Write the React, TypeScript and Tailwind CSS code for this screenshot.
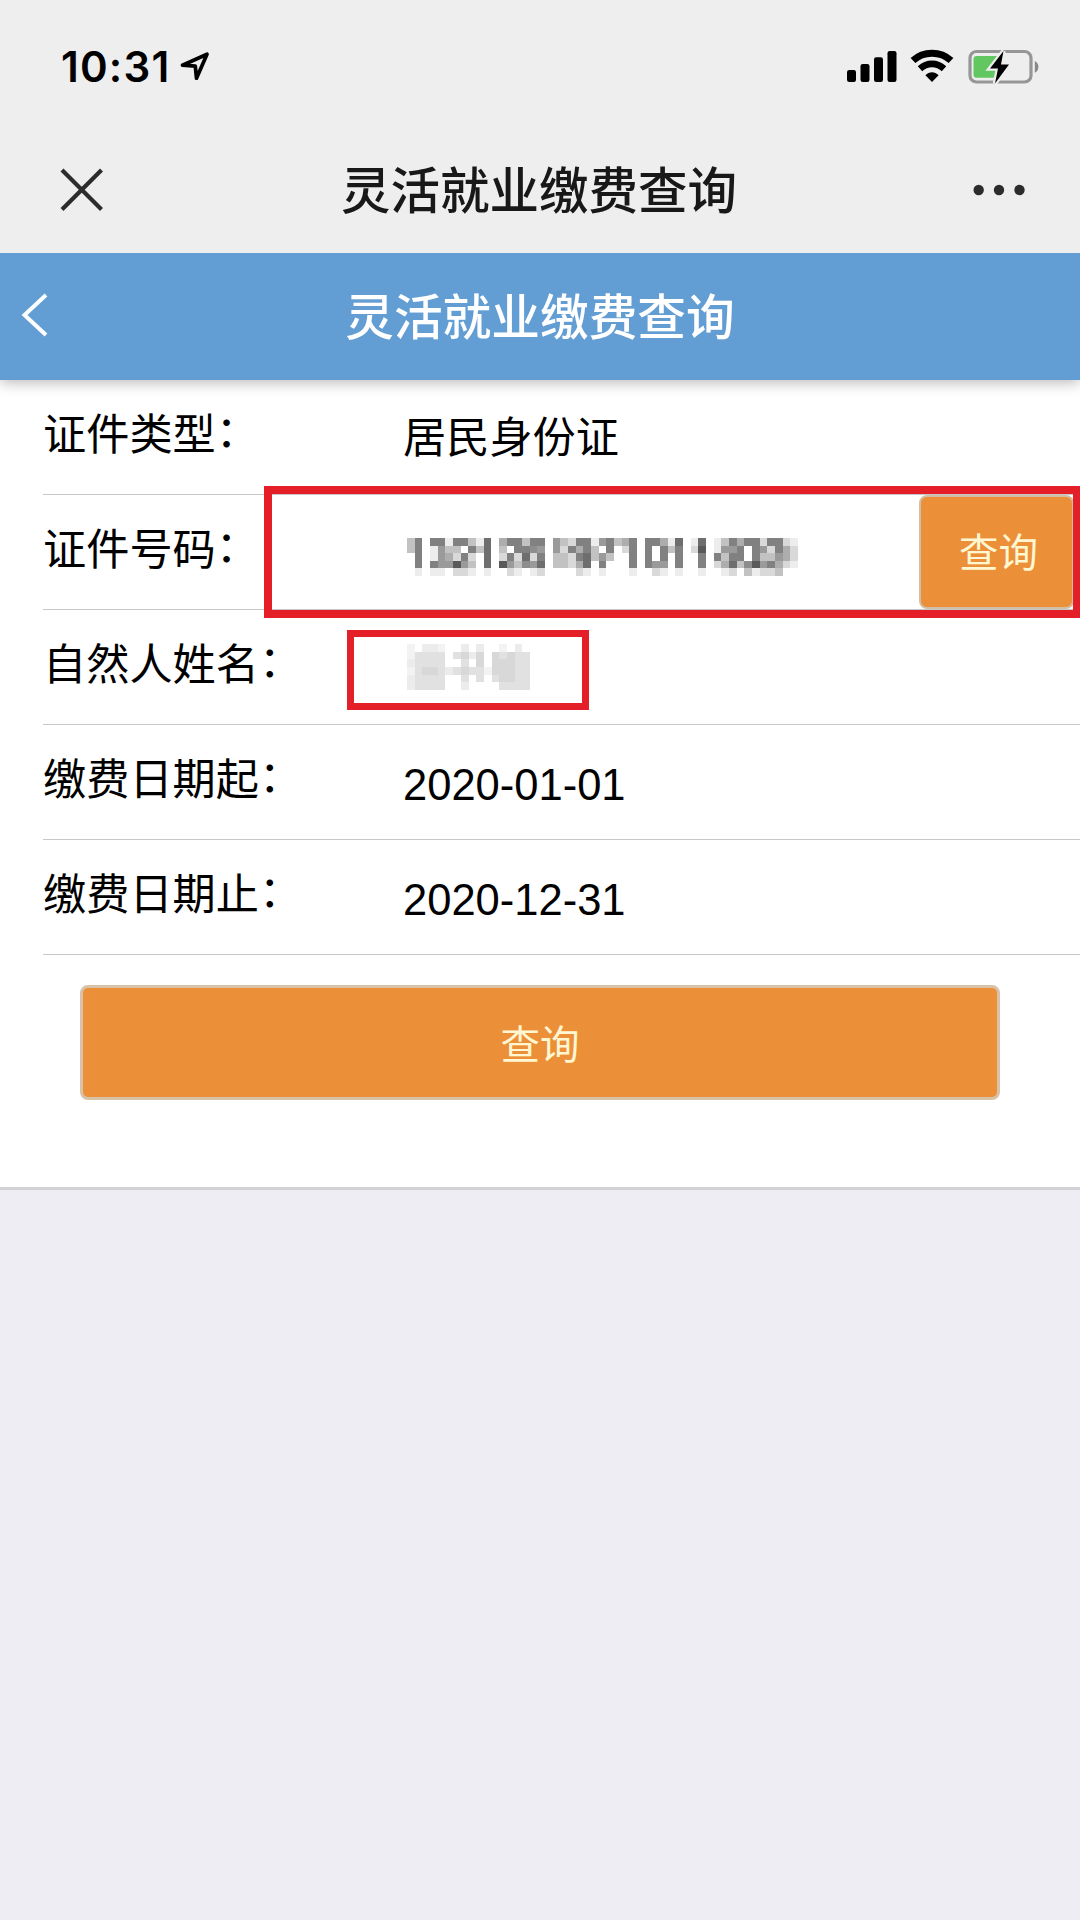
import type { ReactNode } from "react";

// one character per block, "." is empty, a-i goes from light to dark
const idBlocks = [
  "cg.ggaggcah.dggcgg.ecbggaegcdg.ggdah.ah.acgdggbggba",
  "cg.aecc.gch.c.ggfe.ebgdgc.g.bg.g.gcg.bi.aeeg.gebgdb",
  ".g.aedbgb.h.bgbhbg.ccbghcec..g.g.g.g..g.gcgg.gccedb",
  ".g.geeiec.h.iecfeh.ccbdh.g...g.gee.g..g.bdhcfiegdba",
  ".a.aa.bba.a..ba.ab....ba.a...a..ba.a..a..ab.cabbc..",
];

const nameBlocks = [
  "a.bba..b.b..a.b.",
  "acccc.cdbd.dcdcc",
  "bcccc..c.d.dddcc",
  "acddcbcdccadddcc",
  "bcccc..c.c.cddcc",
  "bcccc..b....cccc",
];

const idShades: Record<string, string> = {
  a: "#ededed", b: "#d9d9d9", c: "#c2c2c2", d: "#adadad", e: "#9a9a9a",
  f: "#8d8d8d", g: "#818181", h: "#6e6e6e", i: "#595959",
};

const nameShades: Record<string, string> = {
  a: "#f3f3f3", b: "#ececec", c: "#e1e1e1", d: "#d8d8d8",
};

function Mosaic({ rows, shades, className }: { rows: string[]; shades: Record<string, string>; className: string }) {
  return (
    <svg
      className={className}
      viewBox={`0 0 ${rows[0].length} ${rows.length}`}
      preserveAspectRatio="none"
      shapeRendering="crispEdges">
      {rows.map((row, y) =>
        row.split("").map((c, x) =>
          c === "." ? null : <rect key={`${x}-${y}`} x={x} y={y} width="1" height="1" fill={shades[c]} />
        )
      )}
    </svg>
  );
}

function StatusBar() {
  return (
    <div className="h-[126px] pt-[49px] pl-[61px] pr-[40px] flex items-start justify-between">
      <div className="flex items-start">
        <span className="w-[116px] h-[36px] leading-[36px] font-['Inter'] font-semibold text-[42px] tracking-[1.2px] text-black">
          10:31
        </span>
        <svg className="w-[32px] h-[32px] mt-[1px] ml-[2px]" viewBox="0 0 32 32" fill="none">
          <path d="M3.5 15.2 28 4.2 17.5 28.2 16.3 16.2Z" stroke="#000" strokeWidth="3.7" strokeLinejoin="round" />
        </svg>
      </div>

      <div className="flex items-start">
        {/* Signal */}
        <svg className="w-[50px] h-[34px]" viewBox="0 0 50 34">
          <rect x="0" y="21" width="9" height="12" rx="2.2" />
          <rect x="13.5" y="15" width="9" height="18" rx="2.2" />
          <rect x="27" y="8.3" width="9" height="24.7" rx="2.2" />
          <rect x="40.5" y="2" width="9" height="31" rx="2.2" />
        </svg>
        {/* Wifi */}
        <svg className="w-[44px] h-[34px] ml-[13px]" viewBox="0 0 44 34" fill="none">
          <path d="M3 11.5C13.5 1.7 30.5 1.7 41 11.5" stroke="#000" strokeWidth="7" />
          <path d="M10 19.7C17 13.3 27 13.3 34 19.7" stroke="#000" strokeWidth="6.6" />
          <path d="M15.4 26.2C19.2 22.2 24.8 22.2 28.6 26.2L22 33Z" fill="#000" />
        </svg>
        {/* Battery, charging */}
        <svg className="w-[72px] h-[36px] ml-[14px]" viewBox="0 0 72 36" fill="none">
          <rect x="2" y="2.5" width="61" height="30.5" rx="6.5" stroke="#969698" strokeWidth="3.2" />
          <path d="M66.8 12C71.6 14 71.6 21.8 66.8 23.8Z" fill="#88888a" />
          <path d="M8.5 7H33v21.8H8.5A3 3 0 0 1 5.5 25.8V10A3 3 0 0 1 8.5 7Z" fill="#62c760" />
          <path d="M35.5 2 22 19.5H30L27 34.5 41 15.5H33Z" fill="#000" stroke="#eee" strokeWidth="4.5" paintOrder="stroke" />
        </svg>
      </div>
    </div>
  );
}

function NavBar() {
  return (
    <div className="h-[127px] px-[54px] flex items-center justify-between">
      <svg className="w-[56px] h-[56px]" viewBox="0 0 56 56" fill="none">
        <path d="M8 8 47.5 47.5M47.5 8 8 47.5" stroke="#2c2c2c" strokeWidth="4.2" />
      </svg>
      <h1 className="pt-[4px] pr-[2px] text-[49.5px] leading-[60px] font-medium text-[#181818]">灵活就业缴费查询</h1>
      <svg className="w-[56px] h-[56px]" viewBox="0 0 56 56" fill="#2c2c2c">
        <circle cx="8.7" cy="28" r="5.2" />
        <circle cx="29" cy="28" r="5.2" />
        <circle cx="49.5" cy="28" r="5.2" />
      </svg>
    </div>
  );
}

function Row({ label, children }: { label: string; children?: ReactNode }) {
  return (
    <div className="relative h-[115px] ml-[43px] border-b border-[#c8c8c8] flex items-center">
      <div className="w-[360px] shrink-0 flex text-[43.2px] leading-[60px] pb-[4px]">
        <span>{label}</span>
        <span className="-mt-[3px]">：</span>
      </div>
      {children}
    </div>
  );
}

export default function App() {
  return (
    <div className="w-[1080px] h-[1920px] overflow-hidden bg-[#eeedf3] text-black font-['Liberation_Sans','Noto_Sans_CJK_SC',sans-serif]">
      <header className="relative z-10 bg-[#eeeeee]">
        <StatusBar />
        <NavBar />
      </header>

      <div className="relative h-[127px] bg-[#629dd3] shadow-[0_2px_14px_rgba(0,0,0,0.3)] flex items-center justify-center">
        <svg className="absolute left-[16px] top-[36px] w-[40px] h-[52px]" viewBox="0 0 40 52" fill="none">
          <path d="M30 6 8.5 26 30 46" stroke="#fff" strokeWidth="4" />
        </svg>
        <h2 className="pt-[2px] text-[48.7px] leading-[60px] font-medium text-white">灵活就业缴费查询</h2>
      </div>

      <main className="h-[810px] bg-white border-b-[3px] border-[#d2d2d5]">
        <Row label="证件类型">
          <span className="pt-[1px] text-[43.2px] leading-[60px]">居民身份证</span>
        </Row>
        <Row label="证件号码">
          <Mosaic rows={idBlocks} shades={idShades} className="w-[391px] h-[38px] ml-[4px] mt-[10px]" />
          <button className="ml-auto mr-[6px] w-[155px] h-[114px] pt-[3px] pl-[4px] rounded-[8px] border-2 border-[#d3bfa6] bg-[#eb8f38] text-[#fff6d2] text-[39.5px]">
            查询
          </button>
          <div className="absolute -top-[9px] left-[221px] -right-px h-[132px] border-[8px] border-[#e51f27]" />
        </Row>
        <Row label="自然人姓名">
          <Mosaic rows={nameBlocks} shades={nameShades} className="w-[123px] h-[46px] ml-[4px]" />
          <div className="absolute top-[20px] left-[304px] w-[242px] h-[80px] border-[7.5px] border-[#e51f27]" />
        </Row>
        <Row label="缴费日期起">
          <span className="pt-[5px] text-[43.5px] leading-[60px]">2020-01-01</span>
        </Row>
        <Row label="缴费日期止">
          <span className="pt-[5px] text-[43.5px] leading-[60px]">2020-12-31</span>
        </Row>

        <div className="px-[80px] pt-[30px]">
          <button className="w-full h-[115px] pt-[6px] rounded-[8px] border-[3px] border-[#d8c2a8] bg-[#eb8f38] text-[#fff6d2] text-[39.5px]">
            查询
          </button>
        </div>
      </main>
    </div>
  );
}
